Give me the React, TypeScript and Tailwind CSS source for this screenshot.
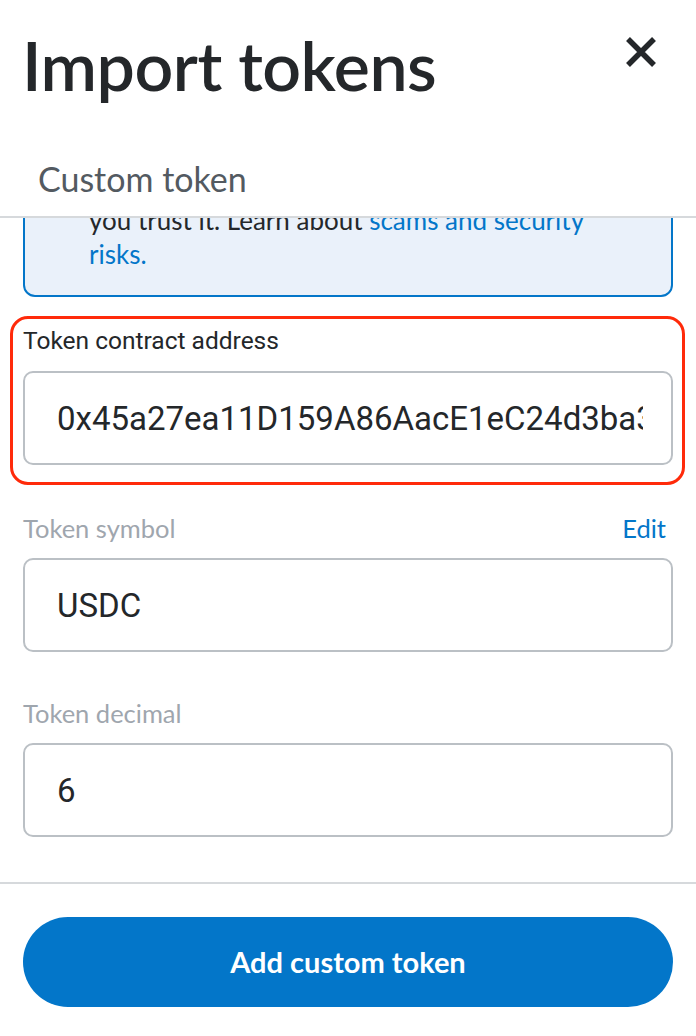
import React from 'react';

const heading = "font-['Lato','Noto_Sans',sans-serif]";
const body = "font-['Roboto','Noto_Sans',sans-serif]";

const Field = ({
  label,
  value,
  muted,
  action,
}: {
  label: string;
  value: string;
  muted?: boolean;
  action?: string;
}) => (
  <div className="flex flex-col">
    <div className="flex items-center justify-between h-[30px]">
      <span
        className={`${muted ? `${heading} text-[25.5px] text-[#9fa6ae]` : `${body} text-[24.5px] text-[#24272a]`} leading-[30px]`}
      >
        {label}
      </span>
      {action && (
        <button className={`${heading} text-[25.5px] leading-[30px] text-[#0376c9] pr-[7px]`}>{action}</button>
      )}
    </div>
    <input
      readOnly
      value={value}
      className={`${body} mt-[15px] h-[94px] w-full rounded-[10px] border-2 border-[#bbc0c5] bg-white pl-[32px] pr-[28px] text-[33px] text-[#24272a] outline-none`}
    />
  </div>
);

export default function App() {
  return (
    <div className="w-[696px] h-[1036px] bg-white flex flex-col overflow-hidden">
      {/* header */}
      <div className="flex items-start justify-between pl-[22px] pr-[38px] pt-[24px] h-[140px] shrink-0">
        <h1 className={`${heading} text-[68px] leading-[82px] font-semibold text-[#24272a] tracking-[-0.5px]`}>
          Import tokens
        </h1>
        <button className="mt-[11px] w-[34px] h-[34px] flex items-center justify-center">
          <svg width="32" height="32" viewBox="0 0 32 32">
            <path d="M3 3 L29 29 M29 3 L3 29" stroke="#24272a" strokeWidth="5.5" strokeLinecap="butt" />
          </svg>
        </button>
      </div>

      {/* tab */}
      <div className="h-[78px] shrink-0 pl-[38px] pt-[19px] border-b-2 border-[#d6d9dc]">
        <span className={`${heading} text-[34px] leading-[40px] text-[#535a61]`}>Custom token</span>
      </div>

      {/* scroll body */}
      <div className="flex-1 overflow-hidden px-[23px]">
        <div className="-mt-[101px] flex flex-col">
          <div className="flex gap-[20px] overflow-hidden rounded-[12px] border-2 border-[#0376c9] bg-[#eaf1fa] pl-[16px] pr-[16px] pt-[16px] pb-[24px]">
            <svg className="mt-[8px] shrink-0" width="28" height="28" viewBox="0 0 24 24">
              <circle cx="12" cy="12" r="10" fill="#0376c9" />
              <rect x="11" y="10" width="2" height="7" fill="#fff" />
              <rect x="11" y="6.5" width="2" height="2" fill="#fff" />
            </svg>
            <p className={`${heading} whitespace-nowrap text-[26px] leading-[34px] text-[#24272a]`}>
              Token detection is not available on this
              <br />
              network yet. Please import token manually
              <br />
              you trust it. Learn about{' '}
              <span className="text-[#0376c9]">scams and security</span>
              <br />
              <span className="text-[#0376c9]">risks.</span>
            </p>
          </div>

          <div className="relative mt-[29px]">
            <Field label="Token contract address" value="0x45a27ea11D159A86AacE1eC24d3ba3A7f1fB4a51" />
            <div className="pointer-events-none absolute -left-[13px] -right-[12px] -top-[10px] -bottom-[20px] rounded-[18px] border-[3px] border-[#ff2a0a]" />
          </div>

          <div className="mt-[48px]">
            <Field label="Token symbol" value="USDC" muted action="Edit" />
          </div>

          <div className="mt-[46px]">
            <Field label="Token decimal" value="6" muted />
          </div>
        </div>
      </div>

      {/* footer */}
      <div className="shrink-0 border-t-2 border-[#d6d9dc] px-[23px] pt-[33px] pb-[29px]">
        <button
          className={`${heading} w-full h-[90px] rounded-full bg-[#0376c9] text-white text-[29px] font-bold`}
        >
          Add custom token
        </button>
      </div>
    </div>
  );
}
